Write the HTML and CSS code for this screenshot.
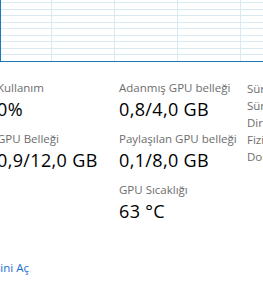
FILE: index.html
```html
<!DOCTYPE html>
<html lang="tr">
<head>
<meta charset="utf-8">
<title>GPU</title>
<link rel="stylesheet" href="styles.css">
</head>
<body>
<div class="page">
  <div class="graph">
    <svg class="grid" width="300" height="61" viewBox="0 0 300 61" shape-rendering="crispEdges">
      <g stroke="#d9eaf4" stroke-width="1">
        <line x1="0" y1="2.5" x2="300" y2="2.5"/>
        <line x1="0" y1="9.5" x2="300" y2="9.5"/>
        <line x1="0" y1="15.5" x2="300" y2="15.5"/>
        <line x1="0" y1="22.5" x2="300" y2="22.5"/>
        <line x1="0" y1="28.5" x2="300" y2="28.5"/>
        <line x1="0" y1="35.5" x2="300" y2="35.5"/>
        <line x1="0" y1="41.5" x2="300" y2="41.5"/>
        <line x1="0" y1="48.5" x2="300" y2="48.5"/>
        <line x1="0" y1="54.5" x2="300" y2="54.5"/>
        <line x1="50.5" y1="0" x2="50.5" y2="61"/>
        <line x1="113.5" y1="0" x2="113.5" y2="61"/>
        <line x1="176.5" y1="0" x2="176.5" y2="61"/>
        <line x1="239.5" y1="0" x2="239.5" y2="61"/>
      </g>
    </svg>
  </div>

  <div class="stats">
    <div class="col col-left">
      <div class="stat">
        <div class="label">Kullanım</div>
        <div class="value">0%</div>
      </div>
      <div class="stat">
        <div class="label">GPU Belleği</div>
        <div class="value">0,9/12,0 GB</div>
      </div>
    </div>
    <div class="col col-mid">
      <div class="stat">
        <div class="label">Adanmış GPU belleği</div>
        <div class="value">0,8/4,0 GB</div>
      </div>
      <div class="stat">
        <div class="label">Paylaşılan GPU belleği</div>
        <div class="value">0,1/8,0 GB</div>
      </div>
      <div class="stat">
        <div class="label">GPU Sıcaklığı</div>
        <div class="value">63 °C</div>
      </div>
    </div>
    <div class="col col-right">
      <div class="key">Sürücü sürümü:</div>
      <div class="key">Sürücü tarihi:</div>
      <div class="key">DirectX sürümü:</div>
      <div class="key">Fiziksel konum:</div>
      <div class="key">Donanım ayrılmış bellek:</div>
    </div>
  </div>

  <div class="footer">
    <a class="link" href="#">Kaynak İzleyicisini Aç</a>
  </div>
</div>
</body>
</html>
```
FILE: styles.css
```css
* { box-sizing: border-box; }
html, body {
  margin: 0;
  padding: 0;
  background: #ffffff;
  overflow: hidden;
}
body {
  width: 263px;
  height: 286px;
  font-family: "Open Sans", "Noto Sans", sans-serif;
}
.page {
  width: 263px;
  overflow: hidden;
}
.graph {
  width: 320px;
  height: 62px;
  border-left: 1px solid #1a78b8;
  border-bottom: 1px solid #1a78b8;
  overflow: hidden;
}
.grid { display: block; }

.stats {
  display: flex;
  padding-top: 18px;
  white-space: nowrap;
}
.col { display: flex; flex-direction: column; gap: 8px; }
.col-left { width: 122px; margin-left: -3px; flex: none; }
.col-mid { width: 128px; flex: none; }
.col-right { gap: 0; flex: none; }

.label {
  font-size: 11.5px;
  line-height: 16px;
  color: #6d6d6d;
}
.value {
  font-size: 18px;
  line-height: 27px;
  letter-spacing: 0.35px;
  color: #000000;
}
.key {
  font-size: 11.5px;
  line-height: 17px;
  color: #6d6d6d;
}

.footer {
  display: flex;
  justify-content: flex-end;
  width: 29px;
  margin-top: 35px;
  white-space: nowrap;
}
.link {
  font-size: 11.5px;
  line-height: 16px;
  color: #1a6fd0;
  text-decoration: none;
}
```
